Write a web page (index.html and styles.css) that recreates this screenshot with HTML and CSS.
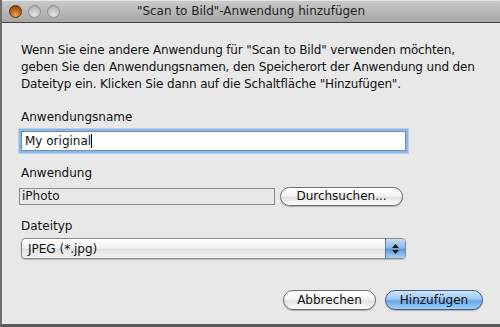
FILE: index.html
```html
<!DOCTYPE html>
<html lang="de">
<head>
<meta charset="utf-8">
<title>"Scan to Bild"-Anwendung hinzufügen</title>
<link rel="stylesheet" href="styles.css">
</head>
<body>
<div class="window">
  <div class="titlebar">
    <div class="lights">
      <span class="light close"></span>
      <span class="light"></span>
      <span class="light"></span>
    </div>
    <div class="title">"Scan to Bild"-Anwendung hinzufügen</div>
  </div>
  <div class="content">
    <p class="intro">Wenn Sie eine andere Anwendung für "Scan to Bild" verwenden möchten, geben Sie den Anwendungsnamen, den Speicherort der Anwendung und den Dateityp ein. Klicken Sie dann auf die Schaltfläche "Hinzufügen".</p>

    <div class="field field-name">
      <div class="label">Anwendungsname</div>
      <div class="input focused">My original<span class="caret"></span></div>
    </div>

    <div class="field field-app">
      <div class="label">Anwendung</div>
      <div class="row">
        <div class="input static">iPhoto</div>
        <div class="btn browse">Durchsuchen...</div>
      </div>
    </div>

    <div class="field field-type">
      <div class="label">Dateityp</div>
      <div class="select">
        <span class="select-text">JPEG (*.jpg)</span>
        <span class="stepper">
          <svg width="9" height="12" viewBox="0 0 9 12"><path d="M4.5 1 L8 5 L1 5 Z" fill="#1a1a1a"/><path d="M4.5 11 L8 7 L1 7 Z" fill="#1a1a1a"/></svg>
        </span>
      </div>
    </div>

    <div class="actions">
      <div class="btn">Abbrechen</div>
      <div class="btn primary">Hinzufügen</div>
    </div>
  </div>
</div>
</body>
</html>
```
FILE: styles.css
```css
html, body {
  margin: 0;
  padding: 0;
  width: 500px;
  height: 327px;
  overflow: hidden;
  background: #e8e8e8;
}
.window {
  width: 500px;
  height: 327px;
  box-sizing: border-box;
  border-left: 2px solid #6e6e6e;
  border-bottom: 3px solid #5a5a5a;
  display: flex;
  flex-direction: column;
  font-family: "DejaVu Sans", Verdana, sans-serif;
  color: #111;
  background: #e8e8e8;
}
.titlebar {
  height: 21px;
  flex: none;
  border-top: 1px solid #e6e6e6;
  border-bottom: 1px solid #444;
  background: linear-gradient(#c9c9c9, #a6a6a6);
  display: flex;
  align-items: center;
  position: relative;
}
.lights {
  display: flex;
  gap: 6px;
  padding-left: 7px;
}
.light {
  width: 13px;
  height: 13px;
  border-radius: 50%;
  box-sizing: border-box;
  border: 1px solid #8e8e8e;
  background: radial-gradient(circle at 50% 75%, #e6e6e6 0%, #c2c2c2 55%, #a9a9a9 100%);
}
.light.close {
  border-color: #5a3414;
  background: radial-gradient(circle at 50% 80%, #f0a55a 0%, #c06a22 45%, #6a3a12 100%);
}
.title {
  position: absolute;
  left: 0;
  right: 0;
  top: 3px;
  text-align: center;
  font-size: 12px;
  color: #1e1e1e;
  pointer-events: none;
}
.content {
  flex: 1;
  padding: 19px 0 0 19px;
  display: flex;
  flex-direction: column;
  font-size: 12px;
}
.intro {
  margin: 0;
  width: 466px;
  line-height: 17px;
  font-size: 12px;
  letter-spacing: -0.15px;
}
.label {
  line-height: 15px;
  font-size: 12px;
}
.field-name { margin-top: 17px; }
.field-app { margin-top: 15px; }
.field-type { margin-top: 13px; }
.input {
  box-sizing: border-box;
  height: 20px;
  line-height: 18px;
  padding-left: 3px;
  background: #fff;
  border: 1px solid #7e7e7e;
  font-size: 12px;
}
.input.focused {
  margin-top: 6px;
  width: 385px;
  border-color: #6b8fb8;
  box-shadow: 0 0 0 2px #8fb6e2, 0 0 0 3px #b9d0ea;
  margin-left: 0;
}
.caret {
  display: inline-block;
  width: 1px;
  height: 14px;
  background: #000;
  vertical-align: -3px;
}
.row {
  display: flex;
  align-items: center;
  margin-top: 6px;
}
.input.static {
  width: 256px;
  height: 17px;
  line-height: 15px;
  background: #e8e8e8;
  border-color: #8a8a8a;
  padding-left: 2px;
  margin-left: -2px;
}
.btn {
  box-sizing: border-box;
  height: 19px;
  border: 1px solid #6c6c6c;
  border-radius: 10px;
  background: linear-gradient(#ffffff 0%, #f4f4f4 45%, #e2e2e2 55%, #ffffff 100%);
  font-size: 12px;
  line-height: 17px;
  text-align: center;
  box-shadow: 0 1px 1px rgba(0,0,0,0.25);
}
.btn.browse {
  width: 123px;
  margin-left: 5px;
}
.select {
  margin-top: 4px;
  width: 385px;
  height: 21px;
  box-sizing: border-box;
  border: 1px solid #8a8a8a;
  border-radius: 4px;
  background: linear-gradient(#ffffff 0%, #f2f2f2 45%, #e0e0e0 55%, #f4f4f4 100%);
  display: flex;
  align-items: center;
  overflow: hidden;
  box-shadow: 0 1px 1px rgba(0,0,0,0.2);
}
.select-text {
  flex: 1;
  padding-left: 6px;
  font-size: 12px;
}
.stepper {
  width: 19px;
  height: 100%;
  display: flex;
  align-items: center;
  justify-content: center;
  border-left: 1px solid #5f7fa8;
  background: linear-gradient(#c5dcf4 0%, #8dbbe9 45%, #5e9ae0 55%, #a9d0f6 100%);
}
.actions {
  display: flex;
  justify-content: flex-end;
  gap: 9px;
  margin-top: 31px;
  padding-right: 17px;
}
.actions .btn {
  height: 20px;
  line-height: 18px;
}
.actions .btn:first-child { width: 93px; }
.btn.primary {
  width: 98px;
  border-color: #3f5f8a;
  background: linear-gradient(#cfe4f8 0%, #9cc8f0 45%, #6aa6e6 55%, #9fd0fa 100%);
}
```
